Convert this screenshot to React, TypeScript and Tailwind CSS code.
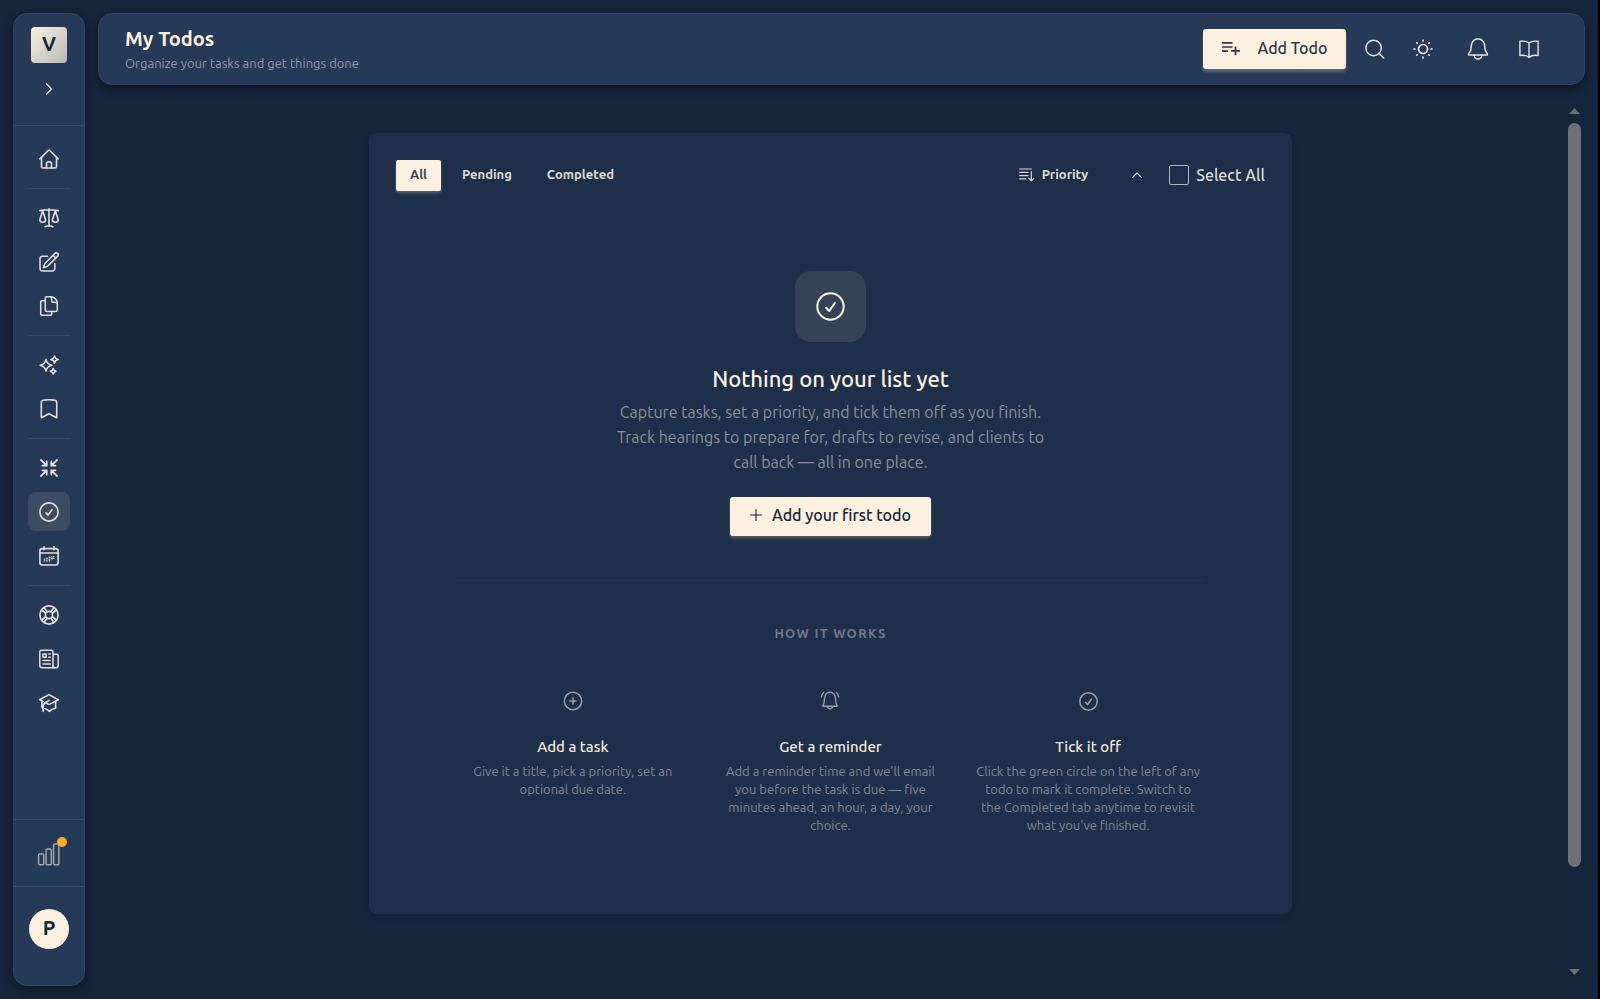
import type { ReactNode } from "react";

type IconProps = { children: ReactNode; className?: string; box?: number; weight?: number };

function Icon({ children, className = "size-5", box = 20, weight = 1.5 }: IconProps) {
  return (
    <svg
      aria-hidden="true"
      viewBox={`0 0 ${box} ${box}`}
      className={`shrink-0 ${className}`}
      fill="none"
      stroke="currentColor"
      strokeWidth={weight}
      strokeLinecap="round"
      strokeLinejoin="round"
    >
      {children}
    </svg>
  );
}

const HomeIcon = () => (
  <Icon weight={1.6}>
    <path d="M.9 9.9 9.200 1.500a1.100 1.100 0 0 1 1.600 0l8.300 8.400" />
    <path d="M2.500 8.400v9a1.600 1.600 0 0 0 1.600 1.600h11.800a1.600 1.600 0 0 0 1.600-1.600v-9" />
    <path d="M7.500 19v-4.400c0-1 .7-1.700 1.600-1.700h1.800c1 0 1.600.7 1.600 1.700V19" />
  </Icon>
);

const ScalesIcon = () => (
  <Icon weight={1.6}>
    <path d="M10 .8v17.400M6 18.800c1.200-.8 2.600-1 4-1s2.800.2 4 1M.8 2.600c3-.6 6.100-.8 9.200-.8s6.200.2 9.200.8" />
    <path d="M3.700 2.700.8 11.800c0 1.600 1.200 2.500 2.900 2.500s2.900-.9 2.900-2.500zM16.300 2.700l-2.900 9.100c0 1.600 1.200 2.500 2.900 2.500s2.900-.9 2.900-2.500z" />
  </Icon>
);

const EditIcon = () => (
  <Icon>
    <path d="M8.600 4.200H3.400A2.400 2.400 0 0 0 1 6.600v10a2.400 2.400 0 0 0 2.400 2.400h10a2.400 2.400 0 0 0 2.400-2.400v-5" />
    <path d="M16 1.400a1.900 1.900 0 0 1 2.700 2.700L8.300 14.400l-3.900 1.400 1.300-4zM14.100 3.300l2.700 2.700" />
  </Icon>
);

const DocumentsIcon = () => (
  <Icon>
    <path d="M6 4.700H2.900a1.200 1.200 0 0 0-1.200 1.200v12.200c0 .7.500 1.200 1.200 1.200h8.600c.7 0 1.200-.5 1.200-1.200V15.500" />
    <path d="M7.800.8h3.900c3.700 0 6.600 3 6.600 6.600v6.500c0 .9-.7 1.500-1.500 1.500h-9c-.9 0-1.500-.7-1.500-1.500V2.300c0-.9.6-1.500 1.500-1.500z" />
    <path d="M11.700.8c1 .5 1 1.500 1 2.400v1.800c0 .7.500 1.200 1.200 1.200h1.800c1.100 0 2 .3 2.500 1.200" />
  </Icon>
);

const SparklesIcon = () => (
  <Icon weight={1.5}>
    <path d="M7 4.300c.7 3.900 2.200 5.200 6 5.900-3.800.7-5.300 2-6 5.900-.7-3.900-2.200-5.200-6-5.900 3.800-.7 5.300-2 6-5.900z" />
    <path d="M15.500.9c.4 2.300 1.300 3.200 3.700 3.700-2.400.4-3.300 1.300-3.700 3.600-.4-2.300-1.300-3.200-3.700-3.600 2.400-.5 3.300-1.400 3.700-3.700zM14.200 13.300c.4 1.900 1 2.500 2.900 2.900-1.900.4-2.500 1-2.900 2.900-.4-1.900-1-2.500-2.900-2.900 1.900-.4 2.500-1 2.900-2.900z" />
  </Icon>
);

const BookmarkIcon = () => (
  <Icon weight={1.6}>
    <path d="M2.300 18.700V3.200c0-1 .7-1.800 1.700-2 4-.6 8-.6 12 0 1 .2 1.700 1 1.700 2v15.500L10 14.800z" />
  </Icon>
);

const CompressIcon = () => (
  <Icon weight={1.8}>
    <path d="m2 2 5.700 5.700M7.700 3.500v4.200H3.500M18 2l-5.700 5.700M12.300 3.500v4.200h4.200M2 18l5.700-5.700M7.700 16.500v-4.200H3.500M18 18l-5.700-5.700M12.300 16.500v-4.200h4.200" />
  </Icon>
);

const CheckCircleIcon = ({ className, weight = 1.6 }: { className?: string; weight?: number }) => (
  <Icon className={className} weight={weight}>
    <circle cx="10" cy="10" r="9.100" />
    <path d="m7 10.900 2.100 2.200 3.900-5.500" />
  </Icon>
);

const CalendarIcon = () => (
  <Icon weight={1.6}>
    <rect x=".9" y="2.600" width="18.200" height="16.400" rx="2.400" />
    <path d="M1 7h18M5 .8v3M15 .8v3" />
    <path
      d="M5.500 12.500v3.200M8 11.700v4M10.400 10.600v5.100M12.600 10.200v4M14.600 10v3.500"
      strokeWidth="1.500"
      strokeDasharray="1.300 .5"
      strokeLinecap="butt"
    />
  </Icon>
);

const HelpIcon = () => (
  <Icon weight={1.6}>
    <circle cx="10" cy="10" r="9.100" />
    <circle cx="10" cy="10" r="3.600" />
    <path d="m6.400 8-3.800-3M8 6.400 5 2.600M13.600 8l3.800-3M12 6.400l3-3.800M6.400 12l-3.800 3M8 13.600l-3 3.800M13.600 12l3.800 3M12 13.600l3 3.800" />
  </Icon>
);

const NewsIcon = () => (
  <Icon weight={1.5}>
    <path d="M14 17V3.200c0-1.200-.8-2-2-2H3c-1.300 0-2.200.9-2.200 2.100v13c0 1.400 1.100 2.500 2.500 2.500h13.300c1.500 0 2.600-1.100 2.600-2.600V6.500c0-.7-.5-1.300-1.300-1.300H14" />
    <path d="M14 16.500c0 1.300.8 2.200 2 2.300" />
    <path d="M4 5h3.200v3.300H4zM9.800 5h1.400M9.800 8.300h1.400M4 11.600h7.200M4 14.900h7.200" />
  </Icon>
);

const GraduationIcon = () => (
  <Icon weight={1.6}>
    <path d="M10 1.600.7 6.700 4 8.500M10 1.600l9.300 5.100-7.900 4.200c-.9.5-1.900.5-2.800 0L6.300 9.700 10 7.400" />
    <path d="M4.200 18.400c.2-2.200 0-3.800-1.700-5M6.300 9.700c-2 1-2.300 2.600-2.100 5M3 8.200v5.200M5.800 15.500c2 .7 3.300 1.800 4.600 2.900 1.500-1.600 3.700-2.700 6.200-3.200V8.500" />
  </Icon>
);

const BarsIcon = () => (
  <Icon className="size-6" box={24} weight={1.4}>
    <rect x="1.600" y="12" width="5.200" height="10.700" rx="1.200" />
    <rect x="9.100" y="7" width="5.200" height="15.700" rx="1.200" />
    <rect x="16.600" y="2" width="5.200" height="20.700" rx="1.200" />
  </Icon>
);

const AddListIcon = () => (
  <Icon weight={1.7}>
    <path d="M1 4.900h10.500M1 9h10.500M1 13.100h6M14.500 8.500v8.700M10.200 12.900H19" strokeLinecap="butt" />
  </Icon>
);

const SearchIcon = () => (
  <Icon weight={1.4}>
    <circle cx="8.600" cy="9" r="7.700" />
    <path d="m14.200 14.600 4.500 4.500" />
  </Icon>
);

const SunIcon = () => (
  <Icon weight={1.7}>
    <circle cx="10" cy="10" r="4.500" />
    <path d="M10 1v1M10 18v1M1 10h1M18 10h1M3.800 3.800l.4.4M15.800 15.800l.4.4M3.800 16.200l.4-.4M15.800 4.200l.4-.4" />
  </Icon>
);

const BellIcon = () => (
  <Icon className="size-[22px]" box={22} weight={1.5}>
    <path d="M1.700 15.700 3.700 12.500c.5-2 .4-4.500.9-6.400C5.400 3 8 1 11 1s5.600 2 6.400 5.100c.5 1.900.4 4.400.9 6.400l2 3.200c.3.600 0 1.300-.7 1.300H2.400c-.7 0-1-.7-.7-1.300z" />
    <path d="M7.200 17.200a3.800 3.800 0 0 0 7.600 0" />
  </Icon>
);

const BookIcon = () => (
  <Icon weight={1.4}>
    <path d="M10 4C8 2.300 4.500 1.800.9 2.300v14.200c3.600-.5 7.100 0 9.100 1.900 2-1.900 5.500-2.400 9.100-1.900V2.300C15.500 1.800 12 2.300 10 4zM10 4v14.400" />
  </Icon>
);

const SortIcon = () => (
  <Icon className="size-4" box={16} weight={1.2}>
    <path d="M.7 2h11.600M.7 5.300h8.300M.7 8.600h8.300M.7 11.900h6M12.300 4.500v9M9.800 11.400l2.500 2.500 2.500-2.500" />
  </Icon>
);

const PlusCircleIcon = () => (
  <Icon weight={1.5}>
    <circle cx="10" cy="10" r="8.700" />
    <path d="M10 7v6M7 10h6" />
  </Icon>
);

const RingingBellIcon = () => (
  <Icon weight={1.4}>
    <path d="M3 14.300c1.500-1.500 1-4.300 1.500-7C5 3.500 7 1.300 10 1.300s5 2.200 5.500 6c.5 2.700 0 5.500 1.500 7 .5.500.2 1-.4 1H3.400c-.6 0-.9-.5-.4-1z" />
    <path d="M7.200 15.600a2.900 2.900 0 0 0 5.600 0M3.600 1.500C2.300 2.700 1.500 4.200 1.300 6M16.400 1.500c1.300 1.200 2.100 2.700 2.300 4.500" />
  </Icon>
);

const navGroups = [
  [{ label: "Home", icon: <HomeIcon /> }],
  [
    { label: "Cases", icon: <ScalesIcon /> },
    { label: "Drafts", icon: <EditIcon /> },
    { label: "Documents", icon: <DocumentsIcon /> },
  ],
  [
    { label: "Assistant", icon: <SparklesIcon /> },
    { label: "Bookmarks", icon: <BookmarkIcon /> },
  ],
  [
    { label: "Compress", icon: <CompressIcon /> },
    { label: "Todos", icon: <CheckCircleIcon />, active: true },
    { label: "Calendar", icon: <CalendarIcon /> },
  ],
  [
    { label: "Help", icon: <HelpIcon /> },
    { label: "News", icon: <NewsIcon /> },
    { label: "Learn", icon: <GraduationIcon /> },
  ],
];

const steps = [
  { title: "Add a task", icon: <PlusCircleIcon />, text: "Give it a title, pick a priority, set an optional due date." },
  {
    title: "Get a reminder",
    icon: <RingingBellIcon />,
    text: "Add a reminder time and we'll email you before the task is due — five minutes ahead, an hour, a day, your choice.",
  },
  {
    title: "Tick it off",
    icon: <CheckCircleIcon className="size-[19px]" />,
    text: "Click the green circle on the left of any todo to mark it complete. Switch to the Completed tab anytime to revisit what you've finished.",
  },
];

function Sidebar() {
  return (
    <aside className="flex w-18 shrink-0 flex-col rounded-[14px] border border-[#344760] bg-[#253a56] text-[#e3dfd8] shadow-[0_4px_10px_rgba(0,0,0,0.4)]">
      <div className="flex h-28 flex-col items-center gap-4 border-b border-[#32496a] pt-[13px]">
        <a
          href="#"
          className="flex size-9 items-center justify-center rounded-sm bg-linear-to-br from-[#fbf0e0] to-[#b9bab8] pb-[2px] text-xl font-bold text-[#15253b]"
        >
          V
        </a>
        <button type="button" aria-label="Expand sidebar" className="flex size-5 items-center justify-center">
          <Icon className="size-3" box={12} weight={1.3}>
            <path d="m3.500 .8 5 5.200-5 5.200" />
          </Icon>
        </button>
      </div>
      <nav aria-label="Main" className="flex flex-1 flex-col px-[14px] pt-[13px]">
        {navGroups.map((group, i) => (
          <div
            key={i}
            className="mb-[9px] flex flex-col gap-[5px] border-b border-[#354964] pb-[10px] last:border-b-0"
          >
            {group.map((item) => (
              <a
                key={item.label}
                href="#"
                aria-label={item.label}
                className={`flex h-[39px] items-center justify-center rounded-lg ${"active" in item ? "bg-[#3c4c63]" : ""}`}
              >
                {item.icon}
              </a>
            ))}
          </div>
        ))}
      </nav>
      <div className="flex h-[67px] items-center justify-center border-t border-[#3a4d69] pt-[2px]">
        <button type="button" aria-label="Usage" className="relative text-[#a6abb1]">
          <BarsIcon />
          <span className="absolute -top-[5px] -right-[6px] size-[10px] rounded-full bg-[#fbab25]" />
        </button>
      </div>
      <div className="flex h-[99px] justify-center border-t border-[#3a4d69] pt-[22px]">
        <button
          type="button"
          className="flex size-10 items-center justify-center rounded-full bg-[#fbf0e0] pb-[2px] text-xl font-bold text-[#15253b]"
        >
          P
        </button>
      </div>
    </aside>
  );
}

function Header() {
  return (
    <header className="flex h-18 shrink-0 items-center justify-between rounded-[14px] border border-[#344760] bg-[#253a56] pr-[45px] pl-[26px] shadow-[0_4px_10px_rgba(0,0,0,0.4)]">
      <div className="pt-[3px]">
        <h1 className="text-xl leading-[25px] font-semibold text-[#fbf0e0]">My Todos</h1>
        <p className="text-[13px] leading-6 text-[#949ca6]">Organize your tasks and get things done</p>
      </div>
      <div className="flex items-center text-[#e8e4dc]">
        <button
          type="button"
          className="mr-[19px] flex h-10 w-[143px] items-center justify-center gap-4 rounded-[3px] bg-[#fbf0e0] pb-[3px] text-base font-medium text-[#2a394b] shadow-[0_3px_3px_rgba(150,150,150,0.5)]"
        >
          <AddListIcon />
          Add Todo
        </button>
        <button type="button" aria-label="Search">
          <SearchIcon />
        </button>
        <button type="button" aria-label="Toggle theme" className="ml-7">
          <SunIcon />
        </button>
        <button type="button" aria-label="Notifications" className="ml-[34px]">
          <BellIcon />
        </button>
        <button type="button" aria-label="Guide" className="ml-[30px]">
          <BookIcon />
        </button>
      </div>
    </header>
  );
}

function Toolbar() {
  return (
    <div className="flex items-center justify-between">
      <div className="flex items-center gap-[7px] text-[13px] font-semibold text-[#dedbd5]">
        <button
          type="button"
          className="h-[31px] rounded-xs bg-[#fbf0e0] px-[14px] pb-[2px] text-[#3b4755] shadow-[0_2px_3px_rgba(150,150,150,0.5)]"
        >
          All
        </button>
        <button type="button" className="h-[31px] px-[14px] pb-[2px]">
          Pending
        </button>
        <button type="button" className="h-[31px] px-[14px] pb-[2px]">
          Completed
        </button>
      </div>
      <div className="flex items-center pb-px text-[#dedbd5]">
        <button type="button" className="flex items-center text-[13px] font-semibold">
          <SortIcon />
          <span className="ml-[7px]">Priority</span>
          <Icon className="ml-[43px] size-3" box={12} weight={1.1}>
            <path d="m1.500 8.500 4.500-4.500 4.500 4.500" />
          </Icon>
        </button>
        <label className="ml-[26px] flex items-center gap-[7px] text-base font-medium">
          <input type="checkbox" className="size-5 appearance-none rounded-xs border border-[#b5b8ba]" />
          Select All
        </label>
      </div>
    </div>
  );
}

function EmptyState() {
  return (
    <section className="flex flex-col items-center pt-20 text-center">
      <div className="flex size-[71px] items-center justify-center rounded-2xl bg-[#354356] text-[#fbf0e0]">
        <CheckCircleIcon className="size-[29px]" weight={1.4} />
      </div>
      <h2 className="mt-5 text-[22px] leading-[33px] font-medium text-[#fbf0e0]">Nothing on your list yet</h2>
      <p className="mt-[5px] max-w-[440px] text-base leading-[25px] text-[#8b929b]">
        Capture tasks, set a priority, and tick them off as you finish. Track hearings to prepare for, drafts to
        revise, and clients to call back — all in one place.
      </p>
      <button
        type="button"
        className="mt-[22px] flex h-[39px] w-[201px] items-center justify-center gap-[10px] rounded-[3px] bg-[#fbf0e0] pb-[3px] text-base font-medium text-[#15253b] shadow-[0_2px_3px_rgba(150,150,150,0.5)]"
      >
        <Icon className="size-3" box={12} weight={1.1}>
          <path d="M6 .5v11M.5 6h11" />
        </Icon>
        Add your first todo
      </button>
    </section>
  );
}

function HowItWorks() {
  return (
    <section className="mx-[61px] mt-11 border-t border-[#24354f] pt-[42px] text-center">
      <h3 className="text-[13px] leading-5 font-semibold tracking-widest text-[#727b87]">HOW IT WORKS</h3>
      <div className="mt-12 grid grid-cols-3 gap-[30px] px-[2px]">
        {steps.map((step) => (
          <div key={step.title} className="flex flex-col items-center text-[#9aa0a7]">
            <div className="flex size-5 items-center justify-center">{step.icon}</div>
            <h4 className="mt-[26px] text-[15px] leading-5 font-medium text-[#f1e9dc]">{step.title}</h4>
            <p className="mt-[5px] text-[13px] leading-[18px] text-[#838a95]">{step.text}</p>
          </div>
        ))}
      </div>
    </section>
  );
}

export default function App() {
  return (
    <div className="flex min-h-screen gap-[13px] border-r-2 border-black bg-[#15253b] py-[13px] pl-[13px] font-['Ubuntu','Noto_Sans',sans-serif]">
      <Sidebar />
      <div className="flex min-w-0 flex-1 flex-col pr-[13px]">
        <Header />
        <div className="flex flex-1 pt-[22px]">
          <main className="flex-1 pt-[26px] pr-px">
            <div className="mx-auto max-w-[923px] rounded-lg bg-[#1e2f49] px-[27px] pt-[27px] pb-20 shadow-[0_3px_6px_rgba(0,0,0,0.12)]">
              <Toolbar />
              <EmptyState />
              <HowItWorks />
            </div>
          </main>
          <div aria-hidden="true" className="flex w-[21px] flex-col items-center pb-[11px]">
            <span className="mt-px h-[6px] w-[11px] bg-[#6a717b] [clip-path:polygon(50%_0,100%_100%,0_100%)]" />
            <span className="mt-[9px] h-[744px] w-[13px] rounded-full bg-[#6a717b]" />
            <span className="mt-auto h-[6px] w-[11px] bg-[#6a717b] [clip-path:polygon(0_0,100%_0,50%_100%)]" />
          </div>
        </div>
      </div>
    </div>
  );
}
